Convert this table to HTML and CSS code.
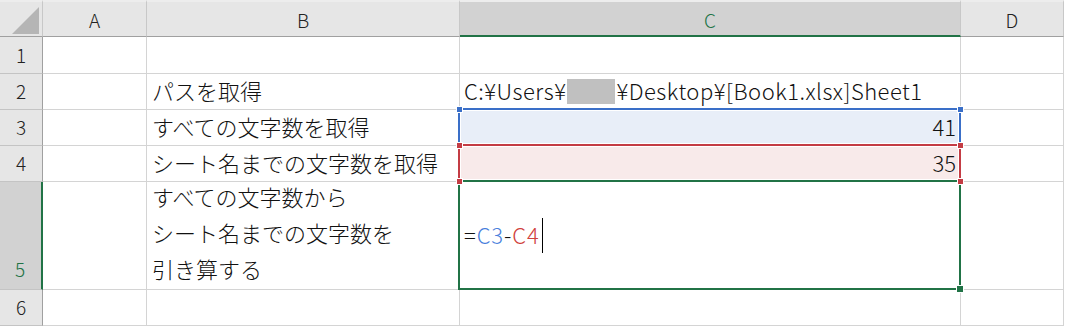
FILE: index.html
```html
<!DOCTYPE html>
<html lang="ja">
<head>
<meta charset="utf-8">
<title>Sheet</title>
<link rel="stylesheet" href="styles.css">
</head>
<body>
<div class="sheet">
  <div class="hd corner">
    <svg class="tri" width="28" height="28" viewBox="0 0 28 28"><polygon points="27,0 27,27 0,27" fill="#b5b5b5"/></svg>
  </div>
  <div class="hd col">A</div>
  <div class="hd col">B</div>
  <div class="hd col sel-col">C</div>
  <div class="hd col">D</div>

  <div class="hd row">1</div>
  <div class="cell"></div>
  <div class="cell"></div>
  <div class="cell"></div>
  <div class="cell"></div>

  <div class="hd row">2</div>
  <div class="cell"></div>
  <div class="cell txt">パスを取得</div>
  <div class="cell txt latin">C:¥Users¥<span class="mask"></span>¥Desktop¥[Book1.xlsx]Sheet1</div>
  <div class="cell"></div>

  <div class="hd row">3</div>
  <div class="cell"></div>
  <div class="cell txt">すべての文字数を取得</div>
  <div class="cell txt num ref ref-blue">41<span class="frame"><i class="h tl"></i><i class="h tr"></i><i class="h bl"></i><i class="h br"></i></span></div>
  <div class="cell"></div>

  <div class="hd row">4</div>
  <div class="cell"></div>
  <div class="cell txt">シート名までの文字数を取得</div>
  <div class="cell txt num ref ref-red">35<span class="frame"><i class="h tl"></i><i class="h tr"></i><i class="h bl"></i><i class="h br"></i></span></div>
  <div class="cell"></div>

  <div class="hd row sel-row">5</div>
  <div class="cell"></div>
  <div class="cell txt multi">すべての文字数から<br>シート名までの文字数を<br>引き算する</div>
  <div class="cell txt latin formula ref active">=<span class="c-blue">C3</span>-<span class="c-red">C4</span><span class="caret"></span><span class="frame"><i class="fill"></i></span></div>
  <div class="cell"></div>

  <div class="hd row">6</div>
  <div class="cell"></div>
  <div class="cell"></div>
  <div class="cell"></div>
  <div class="cell"></div>
</div>
</body>
</html>
```
FILE: styles.css
```css
html, body {
  margin: 0;
  padding: 0;
  background: #ffffff;
}

.sheet {
  display: grid;
  grid-template-columns: 43px 104px 313px 501px 103px;
  grid-template-rows: 37px 37px 36px 36px 36px 108px 36px;
  font-family: "Noto Sans CJK JP", "Noto Sans", sans-serif;
  font-weight: 300;
  color: #111;
  width: 1064px;
}

.hd {
  box-sizing: border-box;
  background: #e6e6e6;
  display: flex;
  align-items: center;
  justify-content: center;
  font-size: 19px;
  color: #222;
}

.corner {
  border-top: 2px solid #ededed;
  border-right: 1px solid #c8c8c8;
  border-bottom: 1px solid #a0a0a0;
  position: relative;
}

.tri {
  position: absolute;
  left: 12px;
  top: 5px;
}

.col {
  border-top: 2px solid #ededed;
  border-right: 1px solid #c8c8c8;
  border-bottom: 1px solid #a0a0a0;
  padding-top: 1px;
}

.sel-col {
  background: #d2d2d2;
  color: #217346;
  border-bottom: 2px solid #217346;
}

.row {
  border-right: 1px solid #a0a0a0;
  border-bottom: 1px solid #c4c4c4;
  line-height: 36px;
  padding-bottom: 1px;
}

.sel-row {
  background: #d2d2d2;
  color: #217346;
  border-right: 2px solid #217346;
  align-items: flex-end;
  padding-right: 1px;
  padding-bottom: 2px;
}

.cell {
  box-sizing: border-box;
  border-right: 1px solid #d4d4d4;
  border-bottom: 1px solid #d4d4d4;
  background: #ffffff;
  display: flex;
  align-items: center;
  font-size: 22px;
  white-space: nowrap;
}

.txt {
  padding-left: 5px;
  line-height: 36px;
  padding-bottom: 3px;
}

.cell.txt:nth-child(5n+4) {
  padding-left: 4px;
}

.latin {
  letter-spacing: 0.5px;
}

.formula {
  letter-spacing: 0.9px;
}

.multi {
  align-items: flex-end;
  line-height: 36px;
}

.num {
  justify-content: flex-end;
  padding-right: 4px;
}

.mask {
  display: inline-block;
  width: 48px;
  height: 25px;
  background: #c0c0c0;
  margin: 0 1px 0 1px;
  align-self: center;
  position: relative;
  top: 1px;
}

.ref {
  position: relative;
}

.ref-blue {
  background: #e8eef8;
}

.ref-red {
  background: #f8eaea;
}

.frame {
  position: absolute;
  top: -2px;
  left: -2px;
  right: -1px;
  bottom: -1px;
  border: 2px solid #3a6fc8;
  box-shadow: inset 0 0 0 1px #ffffff;
}

.ref-red .frame {
  border-color: #c43c44;
}

.active .frame {
  border-color: #217346;
  box-shadow: none;
}

.h {
  position: absolute;
  width: 5px;
  height: 5px;
  background: #3a6fc8;
  outline: 1px solid #ffffff;
  z-index: 1;
}

.ref-red .h {
  background: #c43c44;
}

.h.tl { left: -3px; top: -3px; }
.h.tr { right: -4px; top: -3px; }
.h.bl { left: -3px; bottom: -4px; }
.h.br { right: -4px; bottom: -4px; }

.fill {
  position: absolute;
  width: 6px;
  height: 6px;
  right: -4px;
  bottom: -4px;
  background: #217346;
  outline: 1px solid #ffffff;
  z-index: 1;
}

.c-blue {
  color: #4a7fdc;
}

.c-red {
  color: #d0403c;
}

.caret {
  display: inline-block;
  width: 1px;
  height: 35px;
  background: #000;
  margin-left: 2px;
  align-self: center;
  position: relative;
  top: 1px;
}
```
